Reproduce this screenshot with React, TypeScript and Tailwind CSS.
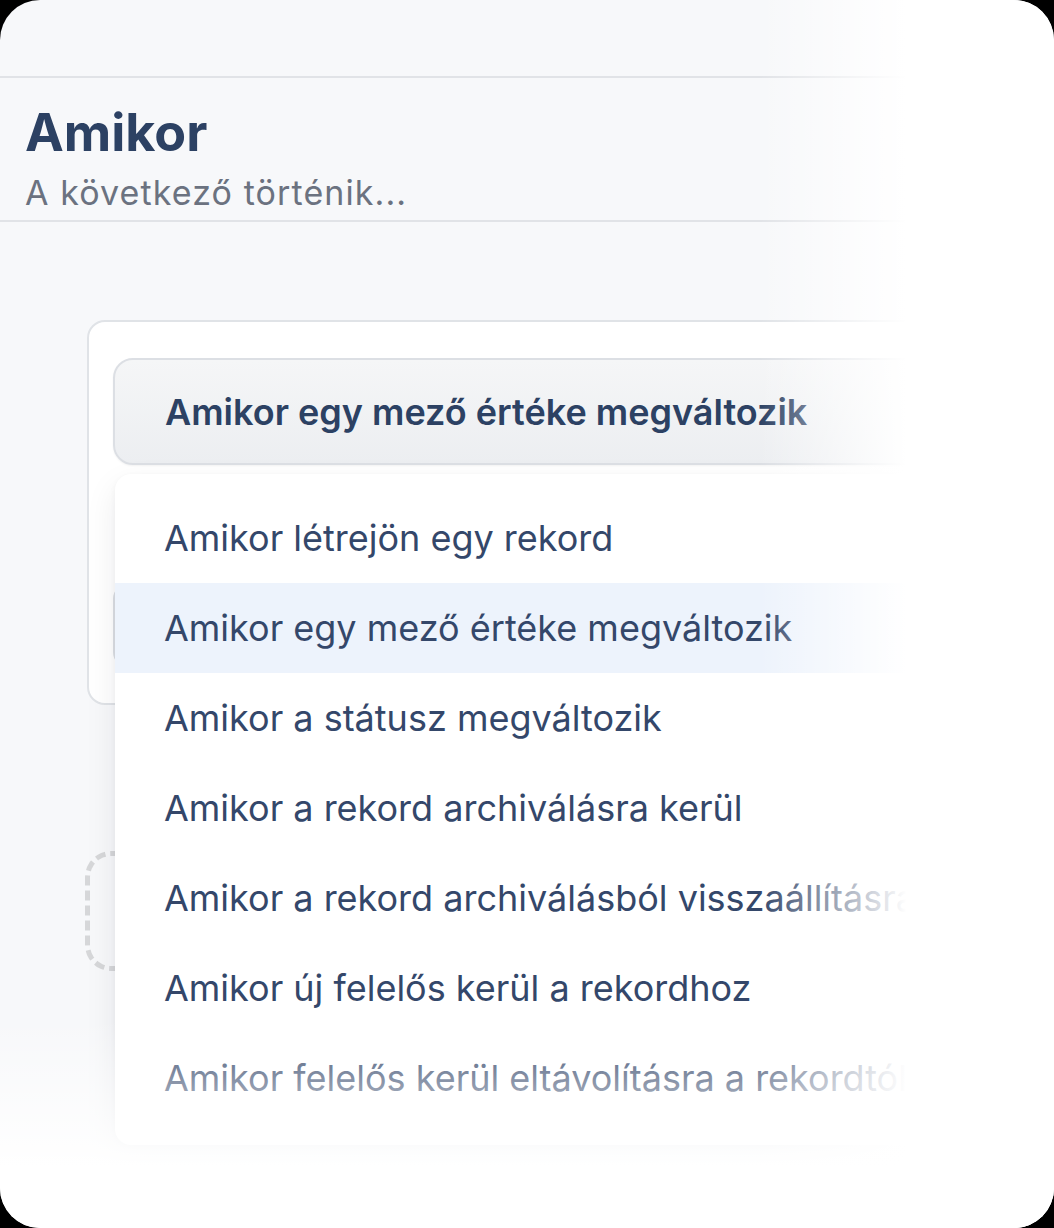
import React from "react";

const options = [
  "Amikor létrejön egy rekord",
  "Amikor egy mező értéke megváltozik",
  "Amikor a státusz megváltozik",
  "Amikor a rekord archiválásra kerül",
  "Amikor a rekord archiválásból visszaállításra kerül",
  "Amikor új felelős kerül a rekordhoz",
  "Amikor felelős kerül eltávolításra a rekordtól",
];

const App: React.FC = () => {
  const selected = 1;

  return (
    <div className="w-[1054px] h-[1228px] bg-black font-['Inter','Noto_Sans',sans-serif]">
      <div className="relative w-full h-full overflow-hidden rounded-[40px] bg-[#f7f8fa]">
        {/* top bar */}
        <div className="h-[78px] border-b-2 border-[#e1e3e7]" />

        {/* heading */}
        <div className="px-[25px] pt-[26px] pb-[8px] border-b-2 border-[#e1e3e7]">
          <h1 className="text-[52px] leading-[58px] font-bold text-[#2c4163]">
            Amikor
          </h1>
          <p className="mt-[12px] text-[34px] leading-[38px] tracking-[1.1px] text-[#6b7280]">
            A következő történik...
          </p>
        </div>

        {/* trigger panel */}
        <div className="ml-[87px] mt-[98px] w-[940px] h-[385px] rounded-[18px] border-2 border-[#e0e3e7] bg-white pt-[36px] pl-[24px] pr-[24px]">
          <div className="flex items-center h-[107px] rounded-[20px] border-2 border-[#dcdfe4] bg-[linear-gradient(to_bottom,#f5f6f7,#eceef1)] pl-[50px] shadow-[0_1px_2px_rgba(0,0,0,0.05)]">
            <span className="text-[36px] font-semibold text-[#2c4163] whitespace-nowrap">
              Amikor egy mező értéke megváltozik
            </span>
          </div>
          <div className="mt-[118px] h-[85px] rounded-[16px] border-2 border-[#dcdfe4] bg-white" />
        </div>

        {/* add step placeholder */}
        <div className="ml-[85px] mt-[146px] w-[600px] h-[120px] rounded-[26px] border-[5px] border-dashed border-[#d6d7d9]" />

        {/* dropdown menu */}
        <div className="absolute left-[115px] top-[474px] w-[880px] rounded-[16px] bg-white pt-[19px] pb-[22px] shadow-[0_12px_32px_rgba(15,23,42,0.08),0_2px_6px_rgba(15,23,42,0.04)]">
          {options.map((o, i) => (
            <div
              key={o}
              className={
                i === selected
                  ? "flex items-center h-[90px] pl-[49px] bg-[#edf3fc]"
                  : "flex items-center h-[90px] pl-[49px]"
              }
            >
              <span className="text-[36px] text-[#34476a] whitespace-nowrap">{o}</span>
            </div>
          ))}
        </div>

        {/* fades */}
        <div className="absolute inset-0 pointer-events-none bg-[linear-gradient(to_right,rgba(255,255,255,0)_72%,#ffffff_86%)]" />
        <div className="absolute inset-0 pointer-events-none bg-[linear-gradient(to_bottom,rgba(255,255,255,0)_83%,#ffffff_95%)]" />
      </div>
    </div>
  );
};

export default App;
